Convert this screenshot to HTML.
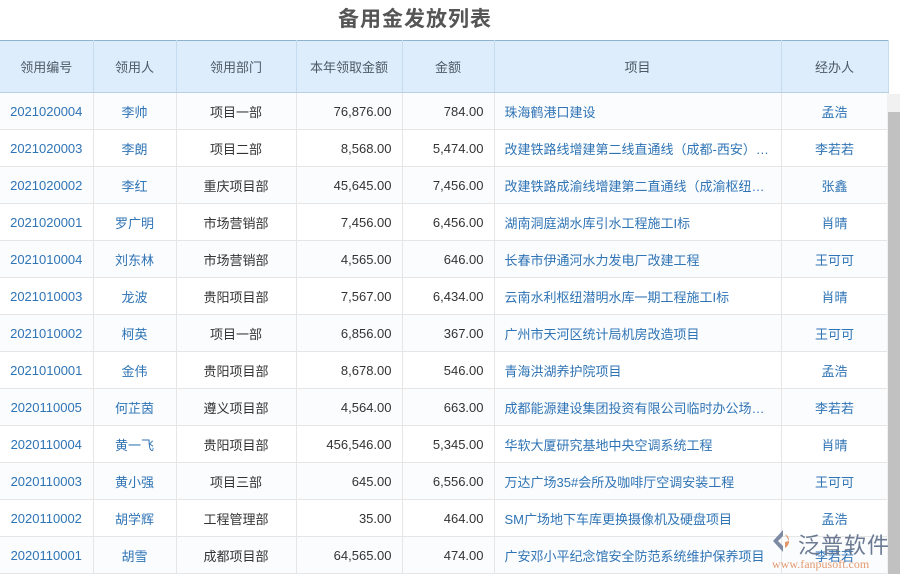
<!DOCTYPE html><html><head><meta charset="utf-8"><style>
body{margin:0;width:900px;height:574px;overflow:hidden;background:#fff;font-family:"Liberation Sans","Noto Sans CJK SC",sans-serif;position:relative}
h1{margin:0;position:absolute;top:3px;left:0;width:830px;text-align:center;font-size:21px;color:#555;font-weight:bold;letter-spacing:1px}
table{position:absolute;top:40px;left:0;border-collapse:collapse;table-layout:fixed;width:888px;font-size:13px}
th{background:#ddedfb;color:#4d5a66;font-weight:normal;height:52px;padding:0;box-sizing:border-box;border:1px solid #c5dcef;border-top:1px solid #8fb4d0;border-bottom:1px solid #b8cfe3}
td{height:37px;box-sizing:border-box;border:1px solid #e6e6e6;text-align:center;color:#333;padding:0 10px;white-space:nowrap;overflow:hidden;text-overflow:ellipsis}
tr:nth-child(even) td{background:#fbfcfe}
td.l{color:#2f74b5}td.r{text-align:right}td.p{text-align:left;color:#2f74b5}
td:first-child{padding:0 4px}
th:first-child,td:first-child{border-left:none}
.sb{position:absolute;left:887px;top:94px;width:13px;height:480px;background:#f1f1f1}
.th{position:absolute;left:888px;top:112px;width:12px;height:462px;background:#c1c1c1}
.logo{position:absolute;left:798px;top:528px;font-size:22px;color:#6b7a92;letter-spacing:1px}
.url{position:absolute;left:772px;top:557px;font-size:12px;color:#e39a6e;font-family:"Liberation Serif",serif}
</style></head><body>
<h1>备用金发放列表</h1>
<table><colgroup><col style="width:93px"><col style="width:83px"><col style="width:120px"><col style="width:106px"><col style="width:92px"><col style="width:287px"><col style="width:107px"></colgroup>
<tr><th>领用编号</th><th>领用人</th><th>领用部门</th><th>本年领取金额</th><th>金额</th><th>项目</th><th>经办人</th></tr>
<tr><td class="l">2021020004</td><td class="l">李帅</td><td>项目一部</td><td class="r">76,876.00</td><td class="r">784.00</td><td class="p">珠海鹤港口建设</td><td class="l">孟浩</td></tr>
<tr><td class="l">2021020003</td><td class="l">李朗</td><td>项目二部</td><td class="r">8,568.00</td><td class="r">5,474.00</td><td class="p">改建铁路线增建第二线直通线（成都-西安）铁路</td><td class="l">李若若</td></tr>
<tr><td class="l">2021020002</td><td class="l">李红</td><td>重庆项目部</td><td class="r">45,645.00</td><td class="r">7,456.00</td><td class="p">改建铁路成渝线增建第二直通线（成渝枢纽）工程</td><td class="l">张鑫</td></tr>
<tr><td class="l">2021020001</td><td class="l">罗广明</td><td>市场营销部</td><td class="r">7,456.00</td><td class="r">6,456.00</td><td class="p">湖南洞庭湖水库引水工程施工I标</td><td class="l">肖晴</td></tr>
<tr><td class="l">2021010004</td><td class="l">刘东林</td><td>市场营销部</td><td class="r">4,565.00</td><td class="r">646.00</td><td class="p">长春市伊通河水力发电厂改建工程</td><td class="l">王可可</td></tr>
<tr><td class="l">2021010003</td><td class="l">龙波</td><td>贵阳项目部</td><td class="r">7,567.00</td><td class="r">6,434.00</td><td class="p">云南水利枢纽潜明水库一期工程施工I标</td><td class="l">肖晴</td></tr>
<tr><td class="l">2021010002</td><td class="l">柯英</td><td>项目一部</td><td class="r">6,856.00</td><td class="r">367.00</td><td class="p">广州市天河区统计局机房改造项目</td><td class="l">王可可</td></tr>
<tr><td class="l">2021010001</td><td class="l">金伟</td><td>贵阳项目部</td><td class="r">8,678.00</td><td class="r">546.00</td><td class="p">青海洪湖养护院项目</td><td class="l">孟浩</td></tr>
<tr><td class="l">2020110005</td><td class="l">何芷茵</td><td>遵义项目部</td><td class="r">4,564.00</td><td class="r">663.00</td><td class="p">成都能源建设集团投资有限公司临时办公场所建设</td><td class="l">李若若</td></tr>
<tr><td class="l">2020110004</td><td class="l">黄一飞</td><td>贵阳项目部</td><td class="r">456,546.00</td><td class="r">5,345.00</td><td class="p">华软大厦研究基地中央空调系统工程</td><td class="l">肖晴</td></tr>
<tr><td class="l">2020110003</td><td class="l">黄小强</td><td>项目三部</td><td class="r">645.00</td><td class="r">6,556.00</td><td class="p">万达广场35#会所及咖啡厅空调安装工程</td><td class="l">王可可</td></tr>
<tr><td class="l">2020110002</td><td class="l">胡学辉</td><td>工程管理部</td><td class="r">35.00</td><td class="r">464.00</td><td class="p">SM广场地下车库更换摄像机及硬盘项目</td><td class="l">孟浩</td></tr>
<tr><td class="l">2020110001</td><td class="l">胡雪</td><td>成都项目部</td><td class="r">64,565.00</td><td class="r">474.00</td><td class="p">广安邓小平纪念馆安全防范系统维护保养项目</td><td class="l">李若若</td></tr>
</table>
<div class="sb"></div><div class="th"></div>
<svg style="position:absolute;left:770px;top:528px" width="26" height="26" viewBox="0 0 26 26"><path d="M13 2 L3 13 L13 24 L13 18 L8 13 L13 8Z" fill="#7d8aa3"/><path d="M15 6 A8 8 0 0 1 15 20 L15 14 L19 13Z" fill="#e0956a"/></svg>
<div class="logo">泛普软件</div><div class="url">www.fanpusoft.com</div>
</body></html>
